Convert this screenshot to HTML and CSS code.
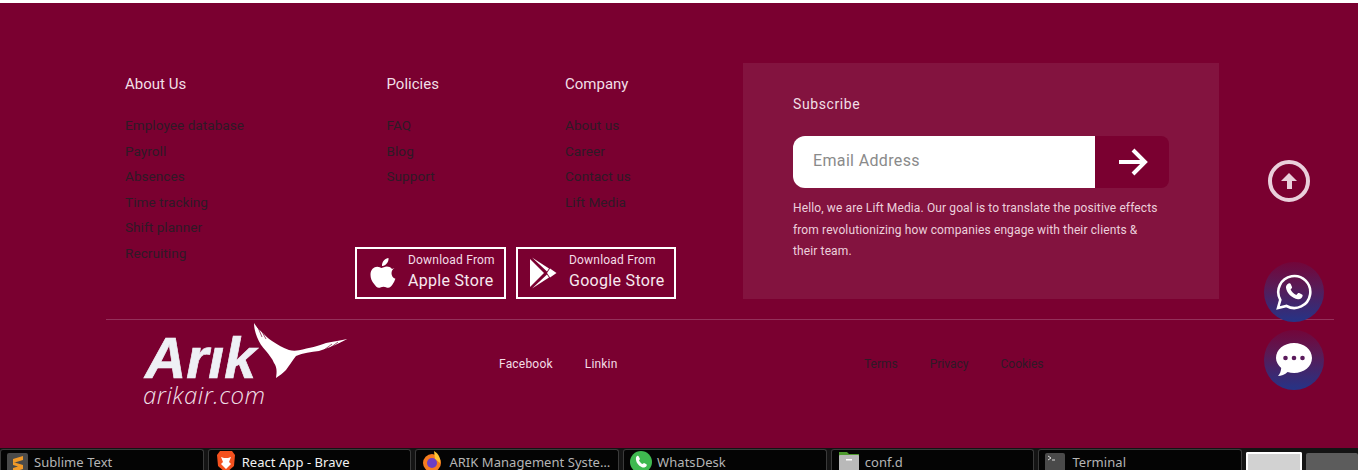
FILE: index.html

```html
<!DOCTYPE html>
<html lang="en">
<head>
  <meta charset="UTF-8">
  <meta name="viewport" content="width=device-width, initial-scale=1.0">
  <title>React App</title>
  <link rel="stylesheet" href="styles.css">
</head>
<body>

<div class="topline"></div>

<footer class="footer">
  <div class="footer-main">
    <div class="footer-left">
      <div class="link-col col-about">
        <h4>About Us</h4>
        <a>Employee database</a>
        <a>Payroll</a>
        <a>Absences</a>
        <a>Time tracking</a>
        <a>Shift planner</a>
        <a>Recruiting</a>
      </div>
      <div class="link-col">
        <h4>Policies</h4>
        <a>FAQ</a>
        <a>Blog</a>
        <a>Support</a>
      </div>
      <div class="link-col">
        <h4>Company</h4>
        <a>About us</a>
        <a>Career</a>
        <a>Contact us</a>
        <a>Lift Media</a>
      </div>
      <div class="stores">
        <div class="store store-apple">
          <svg class="store-icon" width="28" height="32" viewBox="0 0 28 32">
            <path fill="#fff" d="M19.500 1c.2 2.400-.6 4.200-1.800 5.600-1.200 1.500-2.900 2.500-4.700 2.300-.2-2.200.7-4.200 1.900-5.500C16.100 2 18 1.100 19.500 1zM25.500 11c-1.900 1.200-3 3-3 5.200 0 2.600 1.500 4.600 3.900 5.600-.7 2-1.600 3.900-2.900 5.700-1.200 1.700-2.500 3.300-4.300 3.300-1.800 0-2.500-1.100-4.700-1.100-2.200 0-3 1.100-4.700 1.100-1.800 0-3.200-1.800-4.500-3.600C2.700 24.400 1.500 21 1.500 17.700c0-5.200 3.400-8 6.700-8 1.900 0 3.400 1.200 4.600 1.200 1.200 0 2.900-1.300 5-1.300 1.900 0 3.800.7 5.200 2.400z"/>
          </svg>
          <div class="store-text">
            <span>Download From</span>
            <strong>Apple Store</strong>
          </div>
        </div>
        <div class="store store-google">
          <svg class="store-icon" width="28" height="32" viewBox="0 0 28 32">
            <path fill="#fff" d="M1 2v28l14-14z"/>
            <path fill="#fff" d="M3 .5l17 11-2 3z"/>
            <path fill="#fff" d="M3 31.500l17-11-2-3z"/>
            <path fill="#fff" d="M21 11.500l6.500 4.500-6.500 4.500-3-4.500z"/>
          </svg>
          <div class="store-text">
            <span>Download From</span>
            <strong>Google Store</strong>
          </div>
        </div>
      </div>
    </div>

    <div class="subscribe">
      <h4>Subscribe</h4>
      <div class="sub-form">
        <div class="sub-input">Email Address</div>
        <div class="sub-btn">
          <svg width="32" height="30" viewBox="0 0 32 30">
            <path fill="none" stroke="#fff" stroke-width="4" d="M3 15h26M17 3l12 12-12 12"/>
          </svg>
        </div>
      </div>
      <p>Hello, we are Lift Media. Our goal is to translate the positive effects from revolutionizing how companies engage with their clients &amp; their team.</p>
    </div>
  </div>

  <div class="footer-bottom">
    <div class="logo">
      <div class="logo-name">Arık</div>
      <div class="logo-url">arikair.com</div>
      <svg class="logo-bird" width="96" height="60" viewBox="0 0 96 60">
        <path fill="#fff" d="M0 1C2 4 4 7 7 9.300 11 13 14 17 18 19 24 23 29 26 35 28 38 29 42 29 45 28.300 55 26 65 24 72 21 79 20 87 18 93.300 17 84 22 75 26 65 29 57 30 49 31 42 34 38 39 35 44 32 48 29 51 25 54 22 56 23 50 23 45 20 41 18 36 15 33 12 29 8 25 5 20 3 15 1 10 0 5 0 1z"/>
        <path fill="none" stroke="#7a0030" stroke-width=".7" d="M3 3l5 12M6 6l6 11M78 22l-8 6M84 20l-8 6"/>
      </svg>
    </div>
    <div class="social">
      <a>Facebook</a>
      <a>Linkin</a>
    </div>
    <div class="legal">
      <a>Terms</a>
      <a>Privacy</a>
      <a>Cookies</a>
    </div>
  </div>
</footer>

<div class="scroll-up">
  <svg width="18" height="18" viewBox="0 0 18 18">
    <path fill="#eacfdb" d="M9 1l8 8h-5v8H7V9H1z"/>
  </svg>
</div>

<div class="float-btn float-whatsapp">
  <svg width="38" height="38" viewBox="0 0 38 38">
    <path fill="none" stroke="#fff" stroke-width="2.600" d="M3 35l2.300-8.200A16 16 0 1 1 11.500 33z"/>
    <path fill="#fff" d="M13.500 10.500c1-.5 1.800-.4 2.200.4l1.300 3c.2.500.1 1-.3 1.400l-1.100 1.300c1.200 2.400 3.200 4.300 5.700 5.400l1.400-1.600c.4-.4.900-.5 1.400-.3l2.900 1.400c.6.300.8.800.6 1.600-.5 2.200-2.300 3.400-4.600 3.100-6.200-.9-11.200-5.900-12-11.400-.2-1.900.8-3.400 2.500-4.300z"/>
  </svg>
</div>

<div class="float-btn float-chat">
  <svg width="38" height="36" viewBox="0 0 38 36">
    <path fill="#fff" d="M19 1c10 0 18 6.500 18 15s-8 15-18 15c-2.300 0-4.400-.3-6.400-1C10 32.500 6 34 3 34c2-2 3-5 3.200-8C3 23 1 19.700 1 16 1 7.500 9 1 19 1z"/>
    <circle cx="10.500" cy="16" r="2.300" fill="#5a1a5c"/>
    <circle cx="19" cy="16" r="2.300" fill="#5a1a5c"/>
    <circle cx="27.500" cy="16" r="2.300" fill="#5a1a5c"/>
  </svg>
</div>

<div class="taskbar">
  <div class="task">
    <svg width="22" height="22" viewBox="0 0 22 22">
      <rect y="2" width="21" height="20" rx="2" fill="#4a4a4a"/>
      <path fill="#f29a28" d="M16 5v4L6 12V8zM6 11l10 3v4L6 21v-4l5-1.500L6 14z"/>
    </svg>
    <span>Sublime Text</span>
  </div>
  <div class="task task-active">
    <svg width="22" height="22" viewBox="0 0 22 22">
      <path fill="#f4511e" d="M5 0h12l3 4-1 11-8 7-8-7L2 4z"/>
      <path fill="#fff" d="M6 6l3 1h4l3-1-2 5 2 2-5 5-5-5 2-2z"/>
    </svg>
    <span>React App - Brave</span>
  </div>
  <div class="task">
    <svg width="22" height="22" viewBox="0 0 22 22">
      <circle cx="10" cy="12" r="9" fill="#f57c1f"/>
      <path fill="#ffc433" d="M12 0c5 3 7 8 6 12l-5-4z"/>
      <circle cx="10" cy="12" r="5" fill="#6b3fc4"/>
    </svg>
    <span>ARIK Management Syste…</span>
  </div>
  <div class="task">
    <svg width="22" height="22" viewBox="0 0 22 22">
      <circle cx="11" cy="11" r="11" fill="#3fb950"/>
      <path fill="#fff" d="M7 5c1-.5 1.500 0 2 1l1 2-1 1.500c.8 1.600 2 2.800 3.500 3.500l1.500-1 2 1c1 .5 1 1 .5 2-1 1.500-3 2-5 1-3-1.500-5-4-5.500-7C5.800 7 6 5.700 7 5z"/>
    </svg>
    <span>WhatsDesk</span>
  </div>
  <div class="task">
    <svg width="22" height="22" viewBox="0 0 22 22">
      <path fill="#4e9a2e" d="M1 1h8l2 2h10v5H1z"/>
      <rect x="1" y="4" width="20" height="18" rx="1" fill="#b9b9b9"/>
      <rect x="8" y="8" width="6" height="1.500" fill="#fff"/>
    </svg>
    <span>conf.d</span>
  </div>
  <div class="task">
    <svg width="22" height="22" viewBox="0 0 22 22">
      <rect y="2" width="20" height="20" rx="2" fill="#4a4a4a"/>
      <path fill="none" stroke="#ddd" d="M3 5l3 2-3 2M7 9h3"/>
    </svg>
    <span>Terminal</span>
  </div>
  <div class="pager pager-on"></div>
  <div class="pager"></div>
</div>

</body>
</html>
```

FILE: styles.css

```css
html, body {
  margin: 0;
  height: 470px;
  overflow: hidden;
}
body {
  position: relative;
  background: #7a0030;
  font-family: Roboto, 'Liberation Sans', sans-serif;
  color: #f1dfe6;
}
a {
  display: block;
}
h4 {
  margin: 0;
  font-weight: 400;
}
.topline {
  height: 3px;
  background: #fff;
}
.footer {
  height: 445px;
}
.footer-main {
  display: flex;
  padding: 60px 0 0 125px;
  width: 1094px;
  height: 236px;
}
.footer-left {
  width: 618px;
  height: 236px;
  display: grid;
  grid-template-columns: 261.5px 178.5px 178px;
  grid-template-rows: 1fr auto;
  padding-top: 12px;
  box-sizing: border-box;
}
.col-about {
  grid-row: 1 / span 2;
}
.link-col h4 {
  font-size: 15px;
  line-height: 18px;
  margin-bottom: 20px;
}
.link-col a {
  font-size: 13.5px;
  line-height: 25.6px;
  letter-spacing: 0.08px;
  color: #2e1a26;
}
.stores {
  grid-column: 2 / span 2;
  display: flex;
  gap: 10px;
  margin-left: -31.5px;
}
.store {
  box-sizing: border-box;
  height: 52px;
  border: 2px solid #fff;
  display: flex;
  align-items: center;
}
.store-apple {
  width: 151px;
  padding-left: 12px;
  gap: 11px;
}
.store-google {
  width: 160px;
  padding-left: 11px;
  gap: 12px;
}
.store-text {
  display: flex;
  flex-direction: column;
}
.store-text span {
  font-size: 12px;
  line-height: 16px;
  letter-spacing: 0.2px;
  color: #f3dde6;
}
.store-text strong {
  font-size: 16px;
  font-weight: 400;
  line-height: 26px;
  letter-spacing: 0.3px;
  color: #f7e9ef;
}
.subscribe {
  box-sizing: border-box;
  width: 476px;
  height: 236px;
  background: #83133f;
  padding: 32px 50px 0;
}
.subscribe h4 {
  font-size: 14px;
  line-height: 18px;
  letter-spacing: 0.6px;
}
.sub-form {
  display: flex;
  height: 52px;
  margin-top: 23px;
}
.sub-input {
  flex: 1;
  background: #fff;
  border-radius: 12px 0 0 12px;
  padding-left: 20px;
  font-size: 16px;
  line-height: 49px;
  letter-spacing: 0.35px;
  color: #8a8a8a;
}
.sub-btn {
  width: 74px;
  background: #7a0030;
  border-radius: 0 8px 8px 0;
  display: flex;
  align-items: center;
  justify-content: center;
}
.subscribe p {
  margin: 10px 0 0;
  max-width: 368px;
  font-size: 12px;
  line-height: 21.500px;
  letter-spacing: 0.12px;
  color: #ecd0dc;
}
.footer-bottom {
  margin: 20px 24px 0 106px;
  border-top: 1px solid #94305a;
  height: 100px;
  display: flex;
  font-size: 12px;
}
.logo {
  position: relative;
  width: 205px;
  margin-left: 37px;
  color: #eef0f5;
}
.logo-name {
  margin: 13px 0 0 2px;
  font-family: 'Liberation Sans', sans-serif;
  font-size: 57px;
  font-weight: 700;
  font-style: italic;
  line-height: 50px;
  -webkit-text-stroke: 0.7px #eef0f5;
}
.logo-url {
  font-family: 'Open Sans', sans-serif;
  font-size: 24px;
  font-weight: 300;
  font-style: italic;
  line-height: 24px;
  letter-spacing: 0.5px;
  color: #efdfe6;
}
.logo-bird {
  position: absolute;
  left: 111px;
  top: 2px;
}
.social, .legal {
  display: flex;
  height: 87px;
  align-items: center;
  letter-spacing: 0.2px;
}
.social {
  margin-left: 151px;
  gap: 32px;
  width: 366px;
  color: #f3dde6;
}
.legal {
  gap: 32px;
  margin-left: -1px;
  letter-spacing: 0;
  color: #2e1a26;
}
.scroll-up {
  position: absolute;
  left: 1268px;
  top: 160px;
  width: 42px;
  height: 42px;
  box-sizing: border-box;
  border: 4px solid #eacfdb;
  border-radius: 50%;
  display: flex;
  align-items: center;
  justify-content: center;
}
.float-btn {
  position: absolute;
  left: 1264px;
  width: 60px;
  height: 60px;
  border-radius: 50%;
  background: linear-gradient(#72063a, #5a1a55 40%, #253487);
  display: flex;
  align-items: center;
  justify-content: center;
}
.float-whatsapp {
  top: 262px;
}
.float-chat {
  top: 330px;
}
.taskbar {
  position: absolute;
  left: 0;
  top: 448px;
  width: 1358px;
  height: 22px;
  background: #141414;
  display: flex;
  gap: 4px;
  font-family: 'Noto Sans', 'DejaVu Sans', sans-serif;
  font-size: 13px;
  color: #b5b5b5;
  overflow: hidden;
}
.task {
  box-sizing: border-box;
  width: 204px;
  height: 24px;
  margin-top: 1px;
  padding-left: 6px;
  display: flex;
  align-items: center;
  gap: 5px;
  background: #040404;
  border: 1px solid #3a3a3a;
  border-bottom: 0;
  border-radius: 3px 3px 0 0;
  white-space: nowrap;
  letter-spacing: 0.05px;
}
.task span {
  line-height: 24px;
}
.task-active {
  color: #f2f2f2;
}
.pager {
  box-sizing: border-box;
  width: 52px;
  height: 20px;
  margin-top: 5px;
  background: #5c5c5c;
  border-radius: 2px 2px 0 0;
}
.pager-on {
  width: 56px;
  margin-top: 4px;
  background: #d2d2d2;
  border: 2px solid #fff;
  border-bottom: 0;
}
```
